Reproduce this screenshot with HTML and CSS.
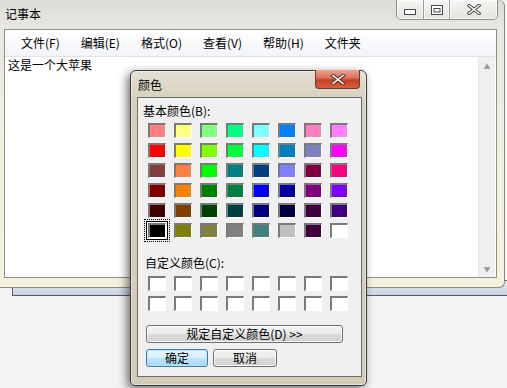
FILE: index.html
```html
<!DOCTYPE html>
<html lang="zh-CN">
<head>
    <meta charset="UTF-8">
    <title>记事本 - 颜色</title>
    <link rel="stylesheet" href="styles.css">
</head>
<body>
    <div class="desktop">
        <div class="back-window"></div>

        <div class="notepad">
            <div class="np-title">
                <span class="np-caption">记事本</span>
                <div class="caption-btns">
                    <span class="cbtn cbtn-min">
                        <svg width="12" height="6" viewBox="0 0 12 6"><rect x="0.5" y="0.5" width="11" height="5" fill="#fff" stroke="#4a4a4a"/></svg>
                    </span>
                    <span class="cbtn cbtn-max">
                        <svg width="12" height="10" viewBox="0 0 12 10"><rect x="0.5" y="0.5" width="11" height="9" fill="#fff" stroke="#4a4a4a"/><rect x="3" y="3.5" width="6" height="3.5" fill="none" stroke="#4a4a4a"/></svg>
                    </span>
                    <span class="cbtn cbtn-close">
                        <svg width="14" height="11" viewBox="0 0 14 11"><path d="M2 1.5 L12 9.5 M12 1.5 L2 9.5" stroke="#4a4a4a" stroke-width="3.4" stroke-linecap="square"/><path d="M2 1.5 L12 9.5 M12 1.5 L2 9.5" stroke="#fff" stroke-width="1.4" stroke-linecap="square"/></svg>
                    </span>
                </div>
            </div>
            <div class="np-client">
                <div class="menubar">
                    <span class="menu-item">文件(F)</span>
                    <span class="menu-item">编辑(E)</span>
                    <span class="menu-item">格式(O)</span>
                    <span class="menu-item">查看(V)</span>
                    <span class="menu-item">帮助(H)</span>
                    <span class="menu-item">文件夹</span>
                </div>
                <div class="editor">
                    <div class="edit-text">这是一个大苹果</div>
                    <div class="vscroll">
                        <span class="sarrow">&#9650;</span>
                        <span class="sarrow">&#9660;</span>
                    </div>
                </div>
            </div>
        </div>

        <div class="dialog">
            <div class="dlg-title">
                <span class="dlg-caption">颜色</span>
                <span class="dlg-close">
                    <svg width="16" height="11" viewBox="0 0 16 11"><path d="M3 1.5 L13 9.5 M13 1.5 L3 9.5" stroke="#5b3a32" stroke-width="3.6" stroke-linecap="square"/><path d="M3 1.5 L13 9.5 M13 1.5 L3 9.5" stroke="#fff" stroke-width="1.6" stroke-linecap="square"/></svg>
                </span>
            </div>
            <div class="dlg-client">
                <div class="dlg-label">基本颜色(B):</div>
                <div class="swatches">
                    <span class="sw" style="background:#ff8080"></span>
                    <span class="sw" style="background:#ffff80"></span>
                    <span class="sw" style="background:#80ff80"></span>
                    <span class="sw" style="background:#00ff80"></span>
                    <span class="sw" style="background:#80ffff"></span>
                    <span class="sw" style="background:#0080ff"></span>
                    <span class="sw" style="background:#ff80c0"></span>
                    <span class="sw" style="background:#ff80ff"></span>

                    <span class="sw" style="background:#ff0000"></span>
                    <span class="sw" style="background:#ffff00"></span>
                    <span class="sw" style="background:#80ff00"></span>
                    <span class="sw" style="background:#00ff40"></span>
                    <span class="sw" style="background:#00ffff"></span>
                    <span class="sw" style="background:#0080c0"></span>
                    <span class="sw" style="background:#8080c0"></span>
                    <span class="sw" style="background:#ff00ff"></span>

                    <span class="sw" style="background:#804040"></span>
                    <span class="sw" style="background:#ff8040"></span>
                    <span class="sw" style="background:#00ff00"></span>
                    <span class="sw" style="background:#008080"></span>
                    <span class="sw" style="background:#004080"></span>
                    <span class="sw" style="background:#8080ff"></span>
                    <span class="sw" style="background:#800040"></span>
                    <span class="sw" style="background:#ff0080"></span>

                    <span class="sw" style="background:#800000"></span>
                    <span class="sw" style="background:#ff8000"></span>
                    <span class="sw" style="background:#008000"></span>
                    <span class="sw" style="background:#008040"></span>
                    <span class="sw" style="background:#0000ff"></span>
                    <span class="sw" style="background:#0000a0"></span>
                    <span class="sw" style="background:#800080"></span>
                    <span class="sw" style="background:#8000ff"></span>

                    <span class="sw" style="background:#400000"></span>
                    <span class="sw" style="background:#804000"></span>
                    <span class="sw" style="background:#004000"></span>
                    <span class="sw" style="background:#004040"></span>
                    <span class="sw" style="background:#000080"></span>
                    <span class="sw" style="background:#000040"></span>
                    <span class="sw" style="background:#400040"></span>
                    <span class="sw" style="background:#400080"></span>

                    <span class="sw sw-selected" style="background:#000000"></span>
                    <span class="sw" style="background:#808000"></span>
                    <span class="sw" style="background:#808040"></span>
                    <span class="sw" style="background:#808080"></span>
                    <span class="sw" style="background:#408080"></span>
                    <span class="sw" style="background:#c0c0c0"></span>
                    <span class="sw" style="background:#400040"></span>
                    <span class="sw" style="background:#ffffff"></span>
                </div>

                <div class="dlg-label custom-label">自定义颜色(C):</div>
                <div class="swatches custom">
                    <span class="sw"></span><span class="sw"></span><span class="sw"></span><span class="sw"></span>
                    <span class="sw"></span><span class="sw"></span><span class="sw"></span><span class="sw"></span>
                    <span class="sw"></span><span class="sw"></span><span class="sw"></span><span class="sw"></span>
                    <span class="sw"></span><span class="sw"></span><span class="sw"></span><span class="sw"></span>
                </div>

                <button class="btn btn-define">规定自定义颜色(D) &gt;&gt;</button>
                <div class="btn-row">
                    <button class="btn btn-default">确定</button>
                    <button class="btn btn-cancel">取消</button>
                </div>
            </div>
        </div>
    </div>
</body>
</html>
```

FILE: styles.css
```css
body {
    margin: 0;
    background: #f3f3f3;
    font-family: "Noto Sans CJK SC", "DejaVu Sans", sans-serif;
    font-size: 12px;
    color: #000;
}

.desktop {
    position: relative;
    width: 507px;
    height: 388px;
    overflow: hidden;
}

/* window partly hidden behind notepad */
.back-window {
    position: absolute;
    left: 12px;
    top: 280px;
    width: 495px;
    height: 16px;
    box-sizing: border-box;
    border: 1px solid #5a5a5a;
    border-right: none;
    background: linear-gradient(#e4e9f1, #c9d4e4);
}

/* ---- notepad ---- */
.notepad {
    position: relative;
    width: 505px;
    height: 288px;
    box-sizing: border-box;
    border-right: 1px solid #8a8a80;
    border-bottom: 1px solid #8a8a80;
    border-radius: 0 6px 6px 0;
    background: linear-gradient(#dcdbd6 0, #e9e8e2 30px, #f1efe0 140px, #f6f3dc 100%);
    display: flex;
    flex-direction: column;
}

.np-title {
    height: 29px;
    display: flex;
    justify-content: space-between;
    align-items: flex-start;
}

.np-caption {
    padding: 7px 0 0 5px;
    line-height: 14px;
    font-size: 12px;
}

.caption-btns {
    display: flex;
    margin-right: 6px;
    height: 20px;
    box-sizing: border-box;
    border: 1px solid #8c8c8c;
    border-top: none;
    border-radius: 0 0 5px 5px;
    overflow: hidden;
    background: linear-gradient(#f6f6f4, #e2e2dd);
}

.cbtn {
    display: flex;
    align-items: center;
    justify-content: center;
    box-sizing: border-box;
    height: 19px;
    box-shadow: inset 0 0 0 1px rgba(255, 255, 255, 0.7);
}

.cbtn-min {
    width: 27px;
    border-right: 1px solid #9a9a9a;
    padding-top: 5px;
}

.cbtn-max {
    width: 26px;
    border-right: 1px solid #9a9a9a;
}

.cbtn-close {
    width: 47px;
}

.np-client {
    margin-left: 4px;
    width: 493px;
    height: 249px;
    box-sizing: border-box;
    border: 1px solid #8e8e8e;
    background: #fff;
    display: flex;
    flex-direction: column;
}

.menubar {
    height: 27px;
    box-sizing: border-box;
    border-bottom: 1px solid #dde1e8;
    background: linear-gradient(#ffffff, #f2f4f8);
    display: flex;
    align-items: center;
    padding-left: 6px;
}

.menu-item {
    padding: 0 10.5px;
    line-height: 16px;
}

.menu-item:first-child {
    padding-left: 10px;
}

.editor {
    flex: 1;
    display: flex;
    justify-content: space-between;
}

.edit-text {
    padding: 1px 0 0 3px;
    font-size: 12px;
    line-height: 14px;
}

.vscroll {
    width: 17px;
    box-sizing: border-box;
    margin-right: 1px;
    border-left: 1px solid #e6e6e6;
    background: #f0f0f0;
    display: flex;
    flex-direction: column;
    justify-content: space-between;
    align-items: center;
    padding: 5px 0 4px;
}

.sarrow {
    font-size: 7px;
    line-height: 8px;
    color: #9a9a9a;
}

/* ---- colour dialog ---- */
.dialog {
    position: absolute;
    left: 130px;
    top: 70px;
    width: 237px;
    height: 316px;
    box-sizing: border-box;
    border: 1px solid #3b3b3b;
    border-radius: 6px 6px 5px 5px;
    background: linear-gradient(#e4e0d3 0, #d6d0bc 30px, #d2cbb5 100%);
    box-shadow: -3px 3px 10px rgba(0, 0, 0, 0.55), inset 0 0 0 1px rgba(255, 255, 255, 0.45);
    padding: 0 5px 8px 6px;
    display: flex;
    flex-direction: column;
}

.dlg-title {
    height: 26px;
    display: flex;
    justify-content: space-between;
    align-items: flex-start;
}

.dlg-caption {
    padding: 7px 0 0 1px;
    line-height: 14px;
}

.dlg-close {
    margin-top: -1px;
    margin-right: 1px;
    width: 45px;
    height: 19px;
    box-sizing: border-box;
    border: 1px solid #6d3a2e;
    border-top: none;
    border-radius: 0 0 4px 4px;
    background: linear-gradient(#e9a493 0, #d86f58 45%, #c24128 55%, #d6603f 100%);
    display: flex;
    align-items: center;
    justify-content: center;
}

.dlg-client {
    width: 225px;
    height: 280px;
    box-sizing: border-box;
    border: 1px solid #6e6e6e;
    background: #f0f0f0;
    display: flex;
    flex-direction: column;
    align-items: flex-start;
}

.dlg-label {
    margin: 6px 0 0 5px;
    line-height: 14px;
}

.swatches {
    margin: 5px 0 0 10px;
    display: grid;
    grid-template-columns: repeat(8, 18px);
    grid-auto-rows: 15px;
    column-gap: 8px;
    row-gap: 5px;
}

.sw {
    box-sizing: border-box;
    border-style: solid;
    border-width: 2px 1px 1px 2px;
    border-color: #7a7a7a #fff #fff #7a7a7a;
    background: #fff;
}

.sw-selected {
    box-shadow: 0 0 0 1px #fff, 0 0 0 2px #000;
    outline: 1px dotted #000;
    outline-offset: 3px;
}

.custom-label {
    margin: 18px 0 0 7px;
}

.swatches.custom {
    margin-top: 6px;
}

.btn {
    font-family: "Noto Sans CJK SC", "DejaVu Sans", sans-serif;
    font-size: 12px;
    height: 18px;
    box-sizing: border-box;
    padding: 0;
    line-height: 14px;
    color: #000;
    border: 1px solid #707070;
    border-radius: 3px;
    background: linear-gradient(#f2f2f2 0, #ebebeb 50%, #dddddd 50%, #cfcfcf 100%);
    box-shadow: inset 0 0 0 1px rgba(255, 255, 255, 0.8);
}

.btn-define {
    margin: 14px 0 0 8px;
    width: 197px;
}

.btn-row {
    margin: 6px 0 0 8px;
    display: flex;
    gap: 5px;
}

.btn-default {
    width: 62px;
    border-color: #3c7fb1;
    background: linear-gradient(#eaf6fd 0, #d9f0fc 50%, #bee6fd 50%, #a7d9f5 100%);
    box-shadow: inset 0 0 0 1px #b6e3fb;
}

.btn-cancel {
    width: 64px;
}
```
